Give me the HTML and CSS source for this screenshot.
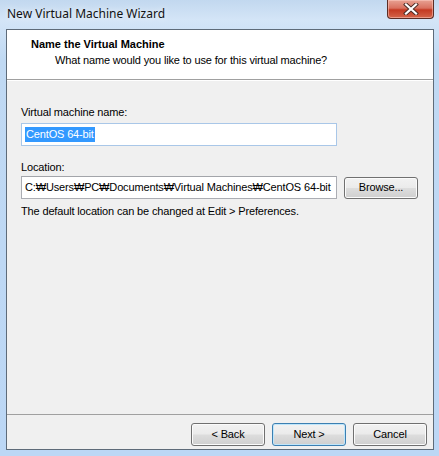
FILE: index.html
```html
<!DOCTYPE html>
<html lang="en">
<head>
    <meta charset="UTF-8">
    <title>New Virtual Machine Wizard</title>
    <link rel="stylesheet" href="styles.css">
</head>
<body>

    <div class="window">
        <div class="titlebar">
            <span class="title">New Virtual Machine Wizard</span>
            <div class="close-btn">
                <svg width="18" height="12" viewBox="0 0 18 12">
                    <path d="M4 1.5 L14 10.5 M14 1.5 L4 10.5" stroke="#4a2a24" stroke-width="4" stroke-linecap="square"/>
                    <path d="M4 1.5 L14 10.5 M14 1.5 L4 10.5" stroke="#ffffff" stroke-width="2.2" stroke-linecap="square"/>
                </svg>
            </div>
        </div>

        <div class="client">
            <div class="header">
                <div class="header-title">Name the Virtual Machine</div>
                <div class="header-sub">What name would you like to use for this virtual machine?</div>
            </div>

            <div class="main">
                <div class="label">Virtual machine name:</div>
                <div class="textbox focused"><span class="selected">CentOS 64-bit</span></div>

                <div class="label location-label">Location:</div>
                <div class="row">
                    <div class="textbox grow">C:₩Users₩PC₩Documents₩Virtual Machines₩CentOS 64-bit</div>
                    <div class="button">Browse...</div>
                </div>
                <div class="note">The default location can be changed at Edit &gt; Preferences.</div>
            </div>

            <div class="footer">
                <div class="button">&lt; Back</div>
                <div class="button default">Next &gt;</div>
                <div class="button">Cancel</div>
            </div>
        </div>
    </div>

</body>
</html>
```

FILE: styles.css
```css
body {
    margin: 0;
    font-family: "Liberation Sans", Arial, sans-serif;
    font-size: 11px;
    line-height: 13px;
    letter-spacing: -0.15px;
    color: #000;
    overflow: hidden;
}
.window {
    width: 439px;
    height: 456px;
    display: flex;
    flex-direction: column;
    background: linear-gradient(to bottom, #c2d8ef 0px, #d4e5f7 20px, #c0d9f3 60px, #bcd7f5 100%);
}
.titlebar {
    height: 29px;
    display: flex;
    align-items: flex-start;
    justify-content: space-between;
}
.title {
    font-family: "Noto Sans", sans-serif;
    font-size: 12px;
    line-height: 16px;
    letter-spacing: 0;
    margin: 6px 0 0 7px;
    color: #111;
    text-shadow: 0 0 6px rgba(255, 255, 255, 0.9);
}
.close-btn {
    width: 45px;
    height: 18px;
    margin-right: 5px;
    border: 1px solid #5b2d25;
    border-top: none;
    border-radius: 0 0 4px 4px;
    background: linear-gradient(to bottom, #e8a293 0%, #d9715f 45%, #c43a22 55%, #d4654a 100%);
    box-shadow: inset 0 0 0 1px rgba(255, 210, 200, 0.5);
    display: flex;
    align-items: center;
    justify-content: center;
}
.client {
    flex: 1;
    margin: 0 5px 6px 6px;
    border: 1px solid #5e6b79;
    background: #f0f0f0;
    display: flex;
    flex-direction: column;
}
.header {
    height: 50px;
    background: #fff;
    border-bottom: 1px solid #a0a0a0;
    box-shadow: 0 1px 0 #ffffff;
    padding: 8px 0 0 24px;
    box-sizing: border-box;
}
.header-title {
    font-weight: bold;
    letter-spacing: 0;
}
.header-sub {
    margin: 3px 0 0 24px;
}
.main {
    flex: 1;
    padding: 26px 15px 0 14px;
}
.label {
    margin-bottom: 4px;
}
.location-label {
    margin-top: 15px;
    margin-bottom: 2px;
}
.textbox {
    width: 316px;
    height: 23px;
    box-sizing: border-box;
    border: 1px solid #abadb3;
    border-top-color: #a3a5aa;
    background: #fff;
    padding: 4px 0 0 3px;
    white-space: nowrap;
    overflow: hidden;
}
.textbox.focused {
    border-color: #a9c7e8;
    padding-top: 3px;
}
.selected {
    background: #3399ff;
    color: #fff;
    display: inline-block;
    padding: 1px 1px 1px 1px;
}
.row {
    display: flex;
    align-items: center;
    gap: 7px;
}
.button {
    width: 74px;
    height: 22px;
    box-sizing: border-box;
    border: 1px solid #707070;
    border-radius: 3px;
    background: linear-gradient(to bottom, #f2f2f2 0%, #ebebeb 48%, #dddddd 52%, #cfcfcf 100%);
    box-shadow: inset 0 0 0 1px #fbfbfb;
    display: flex;
    align-items: center;
    justify-content: center;
}
.note {
    margin-top: 6px;
}
.footer {
    border-top: 1px solid #a0a0a0;
    padding: 8px 6px 3px 0;
    display: flex;
    justify-content: flex-end;
    gap: 7px;
}
.footer .button {
    height: 23px;
}
.button.default {
    border-color: #3c7fb1;
    box-shadow: inset 0 0 0 1px #bfe6fb;
}
```
